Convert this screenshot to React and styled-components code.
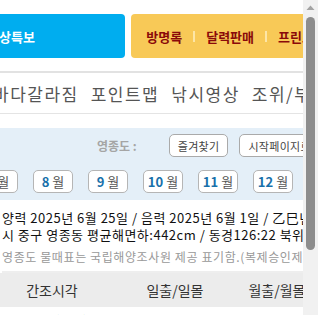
import React from 'react';
import styled, { createGlobalStyle } from 'styled-components';

const GlobalStyle = createGlobalStyle`
  html, body {
    margin: 0;
    padding: 0;
  }
  body {
    overflow: hidden;
    background: #fff;
    font-family: "Noto Sans CJK KR", "Noto Sans", sans-serif;
    color: #222;
  }
`;

const quickLinks = ['방명록', '달력판매', '프린트', '문의하기'];
const navItems = ['바다갈라짐', '포인트맵', '낚시영상', '조위/부이', '날씨'];
const months = [1, 2, 3, 4, 5, 6, 7, 8, 9, 10, 11, 12];

function App() {
  return (
    <>
      <GlobalStyle />
      <Frame>
        <Viewport>
          <Page>
            <TopBar>
              <AlertBox>기상특보</AlertBox>
              <LinkBox>
                {quickLinks.map((t, i) => (
                  <React.Fragment key={t}>
                    {i > 0 && <Sep />}
                    <QuickLink>{t}</QuickLink>
                  </React.Fragment>
                ))}
              </LinkBox>
            </TopBar>

            <Nav>
              {navItems.map((t) => (
                <NavItem key={t}>{t}</NavItem>
              ))}
            </Nav>

            <Panel>
              <PanelTop>
                <PlaceLabel>영종도 :</PlaceLabel>
                <PillButton>즐겨찾기</PillButton>
                <PillButton>시작페이지로</PillButton>
              </PanelTop>
              <MonthRow>
                {months.map((m) => (
                  <MonthButton key={m}>
                    <b>{m}</b> 월
                  </MonthButton>
                ))}
              </MonthRow>
            </Panel>

            <DateInfo>
              <Line>양력 2025년 6월 25일 / 음력 2025년 6월 1일 / 乙巳년</Line>
              <Line>시 중구 영종동 평균해면하:442cm / 동경126:22 북위37:29</Line>
              <Note>영종도 물때표는 국립해양조사원 제공 표기함.(복제승인제1146)</Note>
            </DateInfo>

            <Table>
              <HeadRow>
                <Cell>간조시각</Cell>
                <Cell>일출/일몰</Cell>
                <Cell>월출/월몰</Cell>
              </HeadRow>
              <BodyRow>
                <Cell>10:58 (152)</Cell>
                <Cell $blue>05:11</Cell>
                <Cell>04:20</Cell>
              </BodyRow>
            </Table>
          </Page>
        </Viewport>

        <ScrollTrack>
          <ArrowUp viewBox="0 0 15 15" width="15" height="15">
            <polygon points="3.5,10 7.5,5.5 11.5,10" fill="#a3a3a3" />
          </ArrowUp>
          <Thumb />
        </ScrollTrack>
      </Frame>
    </>
  );
}

export default App;

const Frame = styled.div`
  display: flex;
  width: 100vw;
  height: 100vh;
  overflow: hidden;
`;

const Viewport = styled.div`
  flex: none;
  width: 303px;
  height: 100%;
  overflow: hidden;
`;

const ScrollTrack = styled.div`
  flex: none;
  width: 15px;
  height: 100%;
  background: #f1f1f1;
  display: flex;
  flex-direction: column;
  align-items: center;
`;

const ArrowUp = styled.svg`
  display: block;
  flex: none;
`;

const Thumb = styled.div`
  margin-top: 2px;
  width: 9px;
  height: 233px;
  border-radius: 5px;
  background: #8d8d8d;
`;

const Page = styled.div`
  width: 420px;
  margin-left: -30px;
`;

const TopBar = styled.div`
  display: flex;
  gap: 6px;
  padding-top: 14px;
  height: 44px;
  border-bottom: 2px solid #e2e2e2;
  padding-bottom: 13px;
`;

const AlertBox = styled.div`
  width: 156px;
  height: 44px;
  box-sizing: border-box;
  padding-left: 17px;
  background: #00adef;
  border-radius: 4px;
  color: #fff;
  font-size: 13px;
  font-weight: 700;
  display: flex;
  align-items: center;
`;

const LinkBox = styled.div`
  width: 260px;
  height: 44px;
  box-sizing: border-box;
  padding-left: 15px;
  background: #f8c957;
  border-radius: 4px;
  display: flex;
  align-items: center;
  gap: 11px;
  white-space: nowrap;
`;

const QuickLink = styled.span`
  color: #8a0a0a;
  font-size: 13px;
  font-weight: 700;
`;

const Sep = styled.span`
  width: 2px;
  height: 11px;
  background: #fde6a6;
`;

const Nav = styled.div`
  display: flex;
  gap: 12px;
  padding-left: 23px;
  height: 40px;
  align-items: center;
  border-bottom: 1px solid #e4e4e4;
  white-space: nowrap;
`;

const NavItem = styled.span`
  font-size: 17px;
  letter-spacing: 1.5px;
  color: #555;
`;

const Panel = styled.div`
  margin-top: 14px;
  background: #e4eff8;
  height: 72px;
  box-sizing: border-box;
  padding-top: 6px;
`;

const PanelTop = styled.div`
  display: flex;
  align-items: center;
  padding-left: 127px;
  gap: 11px;
  white-space: nowrap;
`;

const PlaceLabel = styled.span`
  font-size: 12px;
  font-weight: 700;
  color: #a5a5a5;
  margin-right: 21px;
`;

const PillButton = styled.button`
  font-family: inherit;
  height: 23px;
  padding: 0 8px;
  background: #fff;
  border: 1px solid #aaa;
  border-radius: 5px;
  font-size: 11px;
  letter-spacing: 0.3px;
  color: #444;
  box-sizing: border-box;
`;

const MonthRow = styled.div`
  display: flex;
  gap: 15px;
  margin-top: 13px;
  margin-left: -322px;
`;

const MonthButton = styled.span`
  flex: none;
  width: 40px;
  height: 23px;
  box-sizing: border-box;
  background: #fff;
  border: 1px solid #b5b5b5;
  border-radius: 5px;
  display: flex;
  align-items: center;
  justify-content: center;
  gap: 3px;
  font-size: 13px;
  color: #555;
  b {
    color: #1870aa;
  }
`;

const DateInfo = styled.div`
  padding: 9px 0 0 32px;
  white-space: nowrap;
`;

const Line = styled.div`
  font-size: 13px;
  line-height: 17px;
  letter-spacing: 0.5px;
  color: #111;
`;

const Note = styled.div`
  margin-top: 6px;
  font-size: 12px;
  line-height: 16px;
  letter-spacing: 0.6px;
  color: #999;
  padding-bottom: 6px;
  border-bottom: 2px solid #eee;
`;

const Table = styled.div`
  padding-left: 10px;
`;

const HeadRow = styled.div`
  display: grid;
  grid-template-columns: 144px 102px 102px;
  height: 34px;
  align-items: center;
  background: #ececec;
  margin-left: -10px;
  padding-left: 10px;
`;

const BodyRow = styled.div`
  display: grid;
  grid-template-columns: 144px 102px 102px;
  height: 26px;
  align-items: center;
`;

const Cell = styled.div`
  text-align: center;
  font-size: 14px;
  color: ${(p) => (p.$blue ? '#1a1ad0' : '#333')};
`;
